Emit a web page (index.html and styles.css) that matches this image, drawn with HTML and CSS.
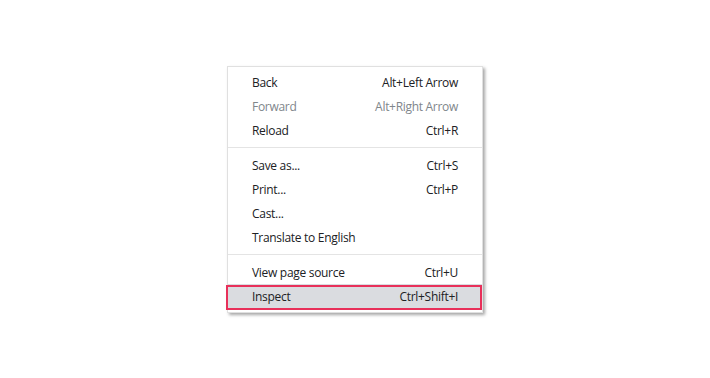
FILE: index.html
```html
<!DOCTYPE html>
<html>
    <head>
        <meta charset="utf-8"/>
        <title>Context menu</title>
        <link rel="stylesheet" href="styles.css">
    </head>
    <body>
        <div class="page">
            <div class="menu">
                <div class="item"><span>Back</span><span>Alt+Left Arrow</span></div>
                <div class="item off"><span>Forward</span><span>Alt+Right Arrow</span></div>
                <div class="item"><span>Reload</span><span>Ctrl+R</span></div>
                <div class="sep"></div>
                <div class="item"><span>Save as...</span><span>Ctrl+S</span></div>
                <div class="item"><span>Print...</span><span>Ctrl+P</span></div>
                <div class="item"><span>Cast...</span><span></span></div>
                <div class="item"><span>Translate to English</span><span></span></div>
                <div class="sep"></div>
                <div class="item"><span>View page source</span><span>Ctrl+U</span></div>
                <div class="item hot"><span>Inspect</span><span>Ctrl+Shift+I</span></div>
            </div>
        </div>
    </body>
</html>
```
FILE: styles.css
```css
body{margin:0;padding:0;background-color:#fff;font-family:'Open Sans','Noto Sans',sans-serif;font-size:12px;letter-spacing:-0.3px;color:#202124;}
.page{width:710px;height:378px;padding-top:66px;box-sizing:border-box;}
.menu{margin-left:227px;width:256px;box-sizing:border-box;padding:3px 0 4px 0;background-color:#fff;border:1px solid #e0e0e0;box-shadow:2px 2px 3px rgba(0,0,0,0.35);}
.item{height:22px;line-height:22px;padding-top:2px;display:flex;justify-content:space-between;padding-left:24px;padding-right:24px;}
.off{color:#80868b;}
.sep{height:1px;margin:5px 0;background-color:#e4e4e4;}
.hot{position:relative;background-color:#dadce0;}
.hot::after{content:'';position:absolute;left:-2px;right:0;top:1px;bottom:-2px;border:2px solid #e8305a;}
```
